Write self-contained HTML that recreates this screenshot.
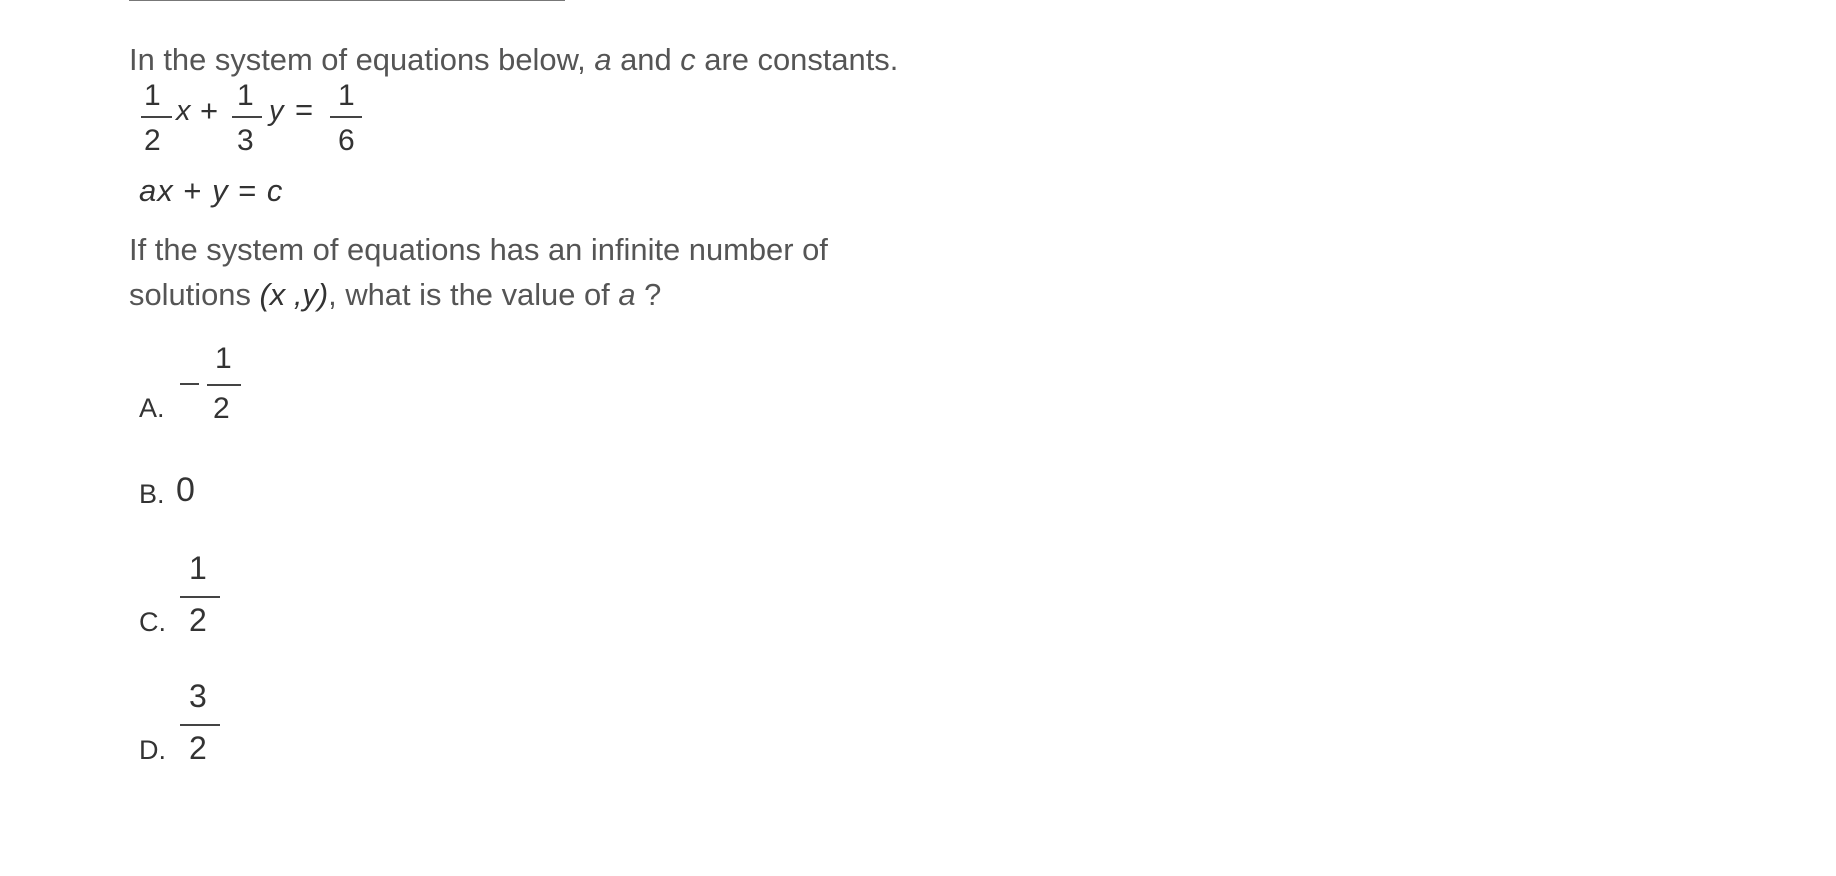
<!DOCTYPE html>
<html><head><meta charset="utf-8"><style>
html,body{margin:0;padding:0;background:#fff;width:1836px;height:876px;overflow:hidden;position:relative}
.t{position:absolute;font-family:"Liberation Sans",Arial,sans-serif;font-size:30.9px;color:#555;white-space:nowrap;line-height:1}
.m{position:absolute;font-family:"Liberation Sans",Arial,sans-serif;color:#333;white-space:nowrap;line-height:1}
.bar{position:absolute;height:2px;background:#444}
</style></head><body>
<div style="position:absolute;left:129px;top:0;width:436px;height:1px;background:#777"></div>

<div class="t" style="left:129px;top:45px">In the system of equations below, <i>a</i> and <i>c</i> are constants.</div>

<!-- eq1 -->
<div class="m" style="left:144px;top:81px;font-size:30px">1</div>
<div class="bar" style="left:141px;top:116px;width:31px"></div>
<div class="m" style="left:144px;top:126px;font-size:30px">2</div>
<div class="m" style="left:176px;top:97px;font-size:29px;font-style:italic">x</div>
<div class="m" style="left:200px;top:95px;font-size:31px">+</div>
<div class="m" style="left:237px;top:81px;font-size:30px">1</div>
<div class="bar" style="left:232px;top:116px;width:30px"></div>
<div class="m" style="left:237px;top:126px;font-size:30px">3</div>
<div class="m" style="left:269px;top:97px;font-size:29px;font-style:italic">y</div>
<div class="m" style="left:295px;top:94px;font-size:31px">=</div>
<div class="m" style="left:338px;top:81px;font-size:30px">1</div>
<div class="bar" style="left:330px;top:116px;width:32px"></div>
<div class="m" style="left:338px;top:126px;font-size:30px">6</div>

<div class="m" style="left:139px;top:175px;font-size:31px;font-style:italic;letter-spacing:1px">ax <span style="font-style:normal">+</span> y <span style="font-style:normal">=</span> c</div>

<div class="t" style="left:129px;top:235px">If the system of equations has an infinite number of</div>
<div class="t" style="left:129px;top:280px">solutions <span style="color:#333;font-style:italic">(x ,y)</span>, what is the value of <i>a</i> ?</div>

<!-- A -->
<div class="t" style="left:139px;top:395px;color:#333;font-size:27px">A.</div>
<div class="bar" style="left:180px;top:383px;width:19px"></div>
<div class="m" style="left:215px;top:344px;font-size:30px">1</div>
<div class="bar" style="left:207px;top:384px;width:34px"></div>
<div class="m" style="left:213px;top:394px;font-size:30px">2</div>

<!-- B -->
<div class="t" style="left:139px;top:481px;color:#333;font-size:27px">B.</div>
<div class="m" style="left:176px;top:473px;font-size:34px">0</div>

<!-- C -->
<div class="t" style="left:139px;top:609px;color:#333;font-size:27px">C.</div>
<div class="m" style="left:189px;top:552px;font-size:32px">1</div>
<div class="bar" style="left:180px;top:596px;width:40px"></div>
<div class="m" style="left:189px;top:604px;font-size:32px">2</div>

<!-- D -->
<div class="t" style="left:139px;top:737px;color:#333;font-size:27px">D.</div>
<div class="m" style="left:189px;top:680px;font-size:32px">3</div>
<div class="bar" style="left:180px;top:724px;width:40px"></div>
<div class="m" style="left:189px;top:732px;font-size:32px">2</div>
</body></html>
